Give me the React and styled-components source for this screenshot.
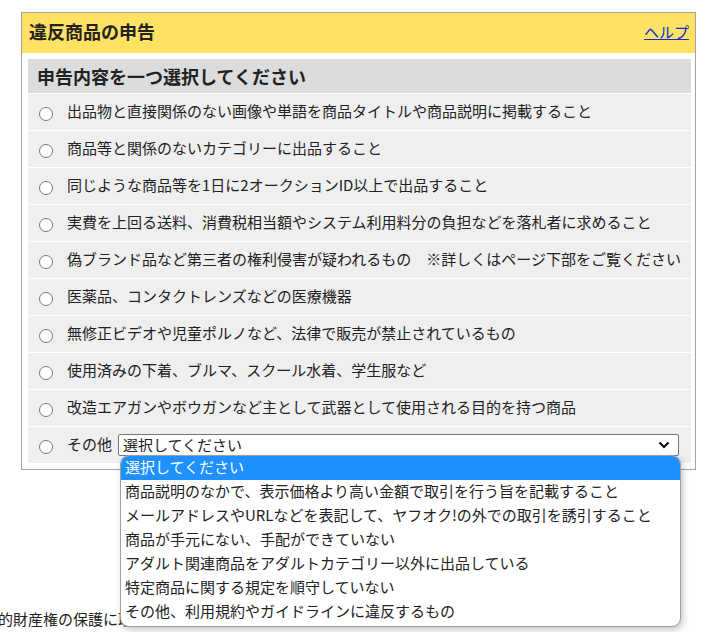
import React from "react";
import styled, { createGlobalStyle } from "styled-components";

const GlobalStyle = createGlobalStyle`
  body {
    margin: 0;
    background: #fff;
    font-family: "Noto Sans CJK JP", "Noto Sans", sans-serif;
    color: #222;
    overflow: hidden;
  }
`;

const Page = styled.div`
  padding: 12px 0 0 21px;
  width: 701px;
  height: 632px;
  box-sizing: border-box;
  overflow: hidden;
`;

const Box = styled.div`
  width: 675px;
  box-sizing: border-box;
  border: 1px solid #a3a3a3;
  padding-bottom: 6px;
`;

const Header = styled.div`
  height: 40px;
  background: #ffe264;
  display: flex;
  align-items: center;
  justify-content: space-between;
  padding: 0 6px 4px 7px;
  box-sizing: border-box;
`;

const Title = styled.h2`
  margin: 0;
  font-size: 18px;
  font-weight: bold;
  line-height: 1;
  color: #222;
`;

const HelpLink = styled.a`
  font-size: 15px;
  color: #0b2bd6;
  text-decoration: underline;
  line-height: 1;
`;

const Panel = styled.div`
  margin: 6px 4px 0 6px;
`;

const SubHeading = styled.h3`
  margin: 0;
  height: 34px;
  background: #dcdcdc;
  display: flex;
  align-items: center;
  padding-left: 9px;
  font-size: 18px;
  font-weight: bold;
  line-height: 1;
`;

const Row = styled.label`
  height: 36px;
  border-top: 1px solid #fff;
  background: #efefef;
  display: flex;
  align-items: center;
  padding-left: 11px;
  font-size: 15px;
  line-height: 1;
  white-space: nowrap;
  position: relative;
`;

const Radio = styled.input`
  width: 14px;
  height: 14px;
  margin: 3px 14px 0 0;
  accent-color: #777;
`;

const Text = styled.span`
  margin-bottom: 4px;
`;

const SelectWrap = styled.div`
  position: relative;
  margin-left: 6px;
`;

const Select = styled.select`
  width: 561px;
  height: 22px;
  font-family: inherit;
  font-size: 15px;
  line-height: 1;
  padding: 0 4px 2px;
  border: 1px solid #767676;
  border-radius: 2px;
  background: #fff;
  color: #222;
  appearance: none;
  display: block;
`;

const Chevron = styled.svg`
  position: absolute;
  right: 9px;
  top: 7px;
  pointer-events: none;
`;

const Popup = styled.ul`
  position: absolute;
  top: 21px;
  left: 2px;
  width: 559px;
  margin: 0;
  padding: 0 0 2px;
  list-style: none;
  background: #fff;
  border: 1px solid #a0a0a0;
  border-radius: 9px;
  box-shadow: 2px 3px 7px rgba(0, 0, 0, 0.22);
  overflow: hidden;
  z-index: 5;
`;

const Option = styled.li`
  height: 24px;
  box-sizing: border-box;
  display: flex;
  align-items: center;
  padding: 0 0 3px 4px;
  font-size: 15px;
  line-height: 1;
  background: ${p => (p.$active ? "#1e90ff" : "transparent")};
  color: ${p => (p.$active ? "#fff" : "#222")};
`;

const Notice = styled.p`
  margin: 141px 0 0 -38px;
  font-size: 15px;
  line-height: 1;
  white-space: nowrap;
`;

const reasons = [
  "出品物と直接関係のない画像や単語を商品タイトルや商品説明に掲載すること",
  "商品等と関係のないカテゴリーに出品すること",
  "同じような商品等を1日に2オークションID以上で出品すること",
  "実費を上回る送料、消費税相当額やシステム利用料分の負担などを落札者に求めること",
  "偽ブランド品など第三者の権利侵害が疑われるもの　※詳しくはページ下部をご覧ください",
  "医薬品、コンタクトレンズなどの医療機器",
  "無修正ビデオや児童ポルノなど、法律で販売が禁止されているもの",
  "使用済みの下着、ブルマ、スクール水着、学生服など",
  "改造エアガンやボウガンなど主として武器として使用される目的を持つ商品",
];

const others = [
  "選択してください",
  "商品説明のなかで、表示価格より高い金額で取引を行う旨を記載すること",
  "メールアドレスやURLなどを表記して、ヤフオク!の外での取引を誘引すること",
  "商品が手元にない、手配ができていない",
  "アダルト関連商品をアダルトカテゴリー以外に出品している",
  "特定商品に関する規定を順守していない",
  "その他、利用規約やガイドラインに違反するもの",
];

const App = () => {
  return (
    <Page>
      <GlobalStyle />
      <Box>
        <Header>
          <Title>違反商品の申告</Title>
          <HelpLink href="#">ヘルプ</HelpLink>
        </Header>
        <Panel>
          <SubHeading>申告内容を一つ選択してください</SubHeading>
          {reasons.map((r, i) => (
            <Row key={i}>
              <Radio type="radio" name="reason" />
              <Text>{r}</Text>
            </Row>
          ))}
          <Row>
            <Radio type="radio" name="reason" />
            <Text>その他</Text>
            <SelectWrap>
              <Select defaultValue={others[0]}>
                {others.map(o => (
                  <option key={o}>{o}</option>
                ))}
              </Select>
              <Chevron width="12" height="8" viewBox="0 0 12 8">
                <path d="M1.5 1.5 L6 6 L10.5 1.5" fill="none" stroke="#111" strokeWidth="2.2" />
              </Chevron>
              <Popup>
                {others.map((o, i) => (
                  <Option key={o} $active={i === 0}>
                    {o}
                  </Option>
                ))}
              </Popup>
            </SelectWrap>
          </Row>
        </Panel>
      </Box>
      <Notice>知的財産権の保護に取り組んでいます。</Notice>
    </Page>
  );
};

export default App;
